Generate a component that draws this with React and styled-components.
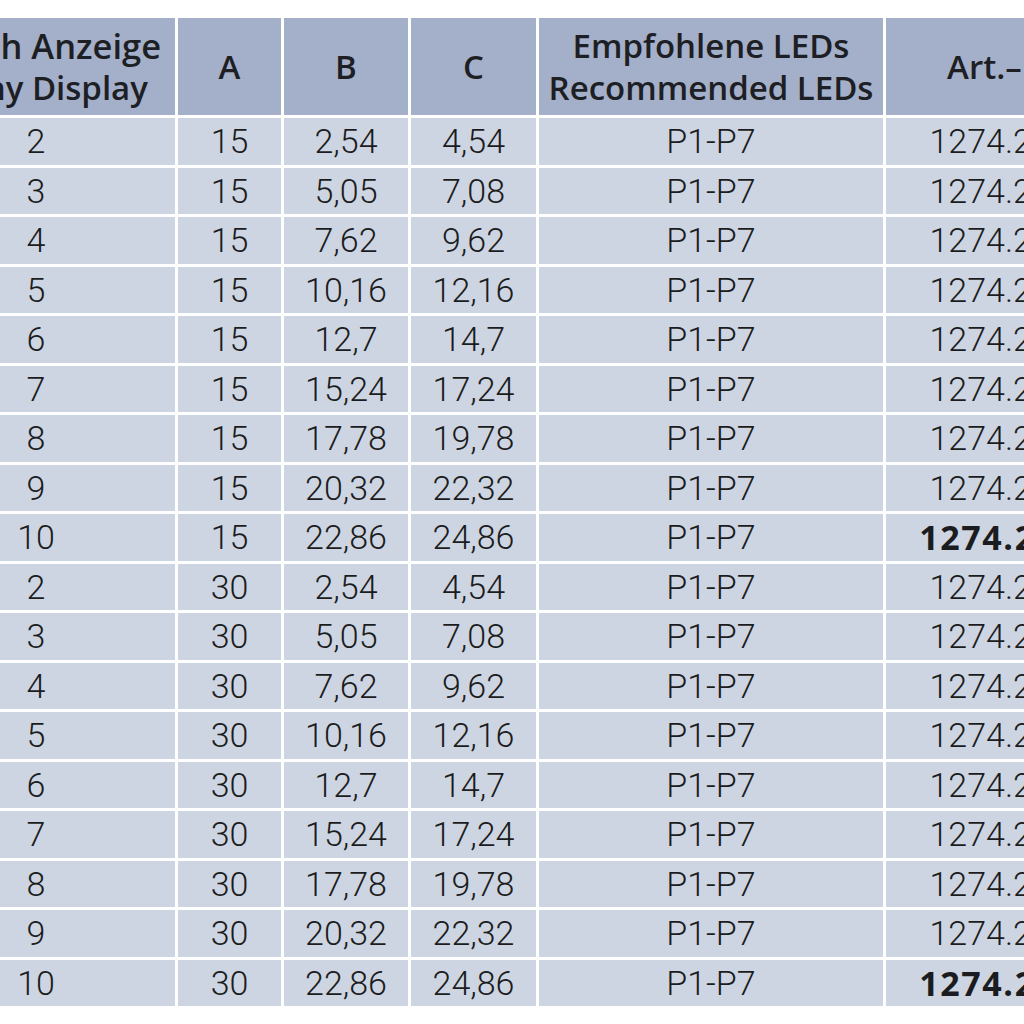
import React from "react";
import styled, { createGlobalStyle } from "styled-components";

const Global = createGlobalStyle`
  html, body { margin: 0; padding: 0; background: #ffffff; }
  body { overflow: hidden; }
`;

const Page = styled.div`
  width: 1024px;
  height: 1024px;
  overflow: hidden;
  background: #ffffff;
  padding-top: 15px;
  box-sizing: border-box;
`;

const Table = styled.table`
  margin-left: -106px;
  border-collapse: separate;
  border-spacing: 3px;
  table-layout: fixed;
  width: 1241px;
`;

const HeadCell = styled.th`
  height: 97px;
  padding: 0;
  background: #a4afc9;
  color: #1d1f24;
  font-family: "Open Sans", "Noto Sans", sans-serif;
  font-weight: 600;
  font-size: 33px;
  line-height: 42px;
  text-align: center;
  vertical-align: middle;
  white-space: nowrap;
  overflow: hidden;
`;

const HeadLine = styled.span`
  display: block;
  padding-left: ${(p) => p.$padLeft || 0}px;
  padding-right: ${(p) => p.$padRight || 0}px;
  font-size: ${(p) => p.$size || 33}px;
`;

const Cell = styled.td`
  height: 46.5px;
  padding: 0;
  background: #ced5e2;
  color: #1b1c20;
  font-family: ${(p) => (p.$bold ? '"Open Sans", "Noto Sans", sans-serif' : 'Roboto, "Liberation Sans", sans-serif')};
  font-weight: ${(p) => (p.$bold ? 700 : 300)};
  letter-spacing: ${(p) => (p.$bold ? "1.6px" : "0")};
  font-size: 34px;
  line-height: 46px;
  text-align: center;
  vertical-align: middle;
  white-space: nowrap;
  overflow: hidden;
`;

const widths = [278, 103, 124, 125, 344, 246];

const b = ["2,54", "5,05", "7,62", "10,16", "12,7", "15,24", "17,78", "20,32", "22,86"];
const c = ["4,54", "7,08", "9,62", "12,16", "14,7", "17,24", "19,78", "22,32", "24,86"];

const rows = [15, 30].flatMap((a) =>
  b.map((bv, i) => ({
    n: String(i + 2),
    a: String(a),
    b: bv,
    c: c[i],
    led: "P1-P7",
    art: "1274.2102",
    bold: i === 8,
  }))
);

export default function App() {
  return (
    <Page>
      <Global />
      <Table>
        <colgroup>
          {widths.map((w, i) => (
            <col key={i} style={{ width: w }} />
          ))}
        </colgroup>
        <thead>
          <tr>
            <HeadCell>
              <HeadLine $size={34.5} $padRight={8}>je nach Anzeige</HeadLine>
              <HeadLine $padLeft={10}>many Display</HeadLine>
            </HeadCell>
            <HeadCell>A</HeadCell>
            <HeadCell>B</HeadCell>
            <HeadCell>C</HeadCell>
            <HeadCell>
              <HeadLine>Empfohlene LEDs</HeadLine>
              <HeadLine>Recommended LEDs</HeadLine>
            </HeadCell>
            <HeadCell>Art.–Nr.</HeadCell>
          </tr>
        </thead>
        <tbody>
          {rows.map((r, i) => (
            <tr key={i}>
              <Cell>{r.n}</Cell>
              <Cell>{r.a}</Cell>
              <Cell>{r.b}</Cell>
              <Cell>{r.c}</Cell>
              <Cell>{r.led}</Cell>
              <Cell $bold={r.bold}>{r.art}</Cell>
            </tr>
          ))}
        </tbody>
      </Table>
    </Page>
  );
}
